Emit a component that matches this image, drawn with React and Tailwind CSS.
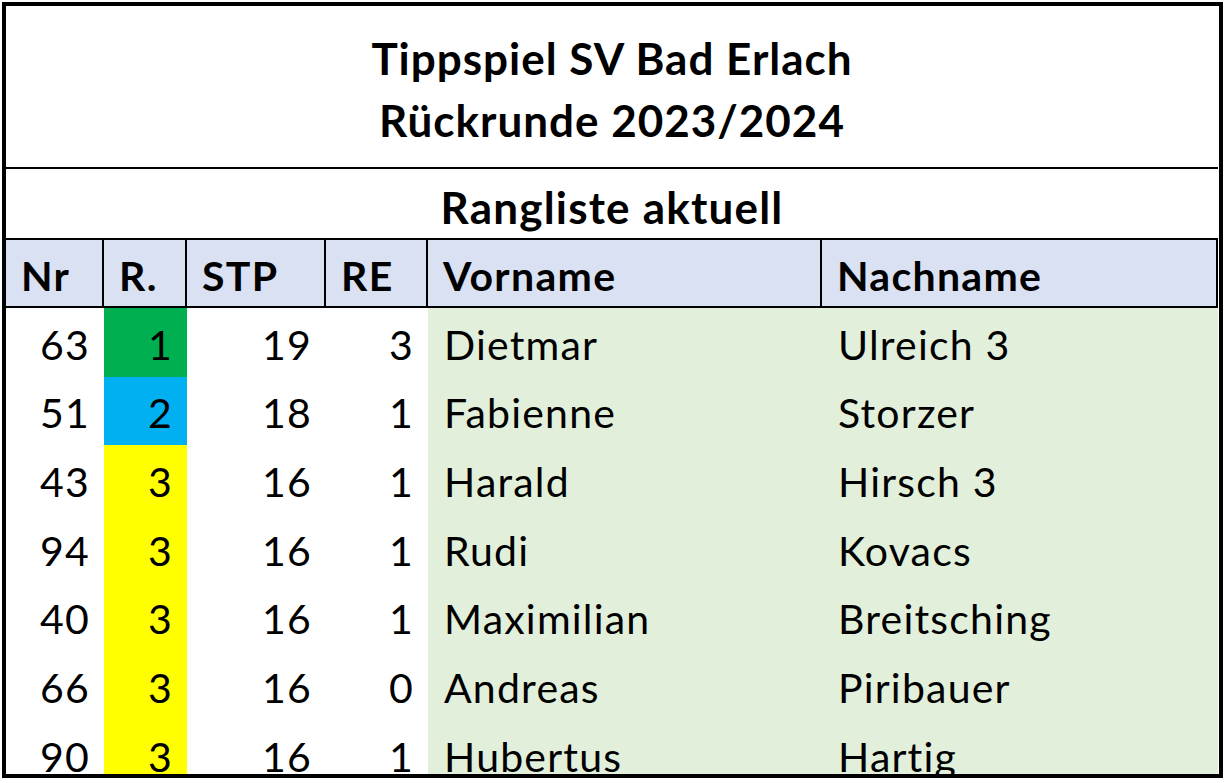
const rows = [
  { nr: 63, r: 1, stp: 19, re: 3, vorname: 'Dietmar', nachname: 'Ulreich 3', color: 'bg-[#00b050]' },
  { nr: 51, r: 2, stp: 18, re: 1, vorname: 'Fabienne', nachname: 'Storzer', color: 'bg-[#00b0f0]' },
  { nr: 43, r: 3, stp: 16, re: 1, vorname: 'Harald', nachname: 'Hirsch 3', color: 'bg-[#ffff00]' },
  { nr: 94, r: 3, stp: 16, re: 1, vorname: 'Rudi', nachname: 'Kovacs', color: 'bg-[#ffff00]' },
  { nr: 40, r: 3, stp: 16, re: 1, vorname: 'Maximilian', nachname: 'Breitsching', color: 'bg-[#ffff00]' },
  { nr: 66, r: 3, stp: 16, re: 0, vorname: 'Andreas', nachname: 'Piribauer', color: 'bg-[#ffff00]' },
  { nr: 90, r: 3, stp: 16, re: 1, vorname: 'Hubertus', nachname: 'Hartig', color: 'bg-[#ffff00]' },
];

const cols = 'grid grid-cols-[98px_83px_139px_102px_394px_396px]';

const HeadCell = ({ children }) => (
  <div className="flex items-end border-r-2 border-black pl-[15px] pb-[10px]">{children}</div>
);

const Num = ({ children, className = '' }) => (
  <div className={`flex items-end justify-end pr-[14px] pb-[12px] ${className}`}>{children}</div>
);

const Name = ({ children }) => (
  <div className="flex items-end bg-[#e2efda] pl-[16px] pb-[12px]">{children}</div>
);

export default function App() {
  return (
    <div className="min-h-screen bg-white pl-[2px] pt-[2px] font-['Lato',sans-serif] text-black">
      <div className="h-[776px] w-[1221px] overflow-hidden border-4 border-black pr-[1px]">
        <div className="flex h-[161px] flex-col items-center justify-center pt-[4px] text-[44px] font-bold leading-[62px] tracking-[1px]">
          <div>Tippspiel SV Bad Erlach</div>
          <div>Rückrunde 2023/2024</div>
        </div>
        <div className="flex h-[71px] items-center justify-center border-t-2 border-black pt-[7px] text-[44px] font-bold tracking-[1.2px]">
          Rangliste aktuell
        </div>
        <div className={`${cols} h-[70px] border-y-2 border-black bg-[#d9e1f2] text-[41px] font-bold leading-none tracking-[1.3px]`}>
          <HeadCell>Nr</HeadCell>
          <HeadCell>R.</HeadCell>
          <HeadCell>STP</HeadCell>
          <HeadCell>RE</HeadCell>
          <HeadCell>Vorname</HeadCell>
          <HeadCell>Nachname</HeadCell>
        </div>
        {rows.map((row) => (
          <div key={row.nr} className={`${cols} h-[68.7px] text-[41px] leading-none tracking-[1.2px]`}>
            <Num>{row.nr}</Num>
            <Num className={row.color}>{row.r}</Num>
            <Num>{row.stp}</Num>
            <Num>{row.re}</Num>
            <Name>{row.vorname}</Name>
            <Name>{row.nachname}</Name>
          </div>
        ))}
      </div>
    </div>
  );
}
